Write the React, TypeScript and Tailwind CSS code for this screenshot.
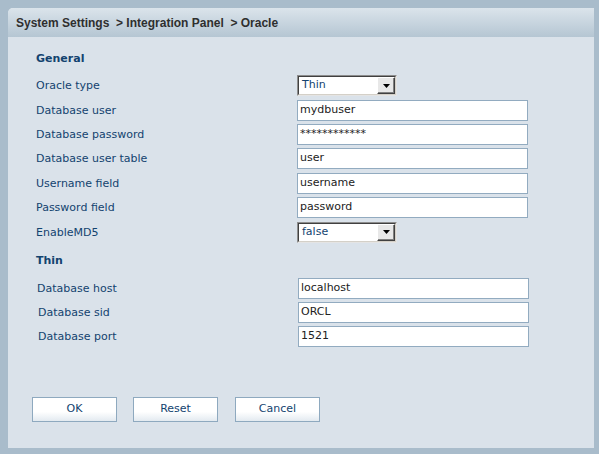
import React from "react";

const labelCls = "w-[261px] shrink-0 text-[11px] text-[#13436f] leading-none";
const font = { fontFamily: '"DejaVu Sans", Verdana, sans-serif' };

function TextInput({ value }: { value: string }) {
  return (
    <div className="flex h-[21px] w-[231px] items-center border border-[#92abc0] bg-white pl-[2px] text-[11px] text-[#222]">
      {value}
    </div>
  );
}

function Select({ value }: { value: string }) {
  return (
    <div className="flex h-[21px] w-[100px] border border-t-[#8d8d8d] border-l-[#8d8d8d] border-r-[#e4e4e4] border-b-[#e4e4e4] bg-white">
      <div className="flex flex-1 items-center border border-t-[#404040] border-l-[#404040] border-r-[#d4d0c8] border-b-[#d4d0c8] pl-[3px] text-[11px] text-[#13436f]">
        <span className="flex-1">{value}</span>
        <div className="flex h-[17px] w-[18px] items-center justify-center border border-t-[#ffffff] border-l-[#ffffff] border-r-[#404040] border-b-[#404040] bg-[#e8e8e8] shadow-[inset_-1px_-1px_0_#808080]">
          <svg width="7" height="4" viewBox="0 0 7 4">
            <polygon points="0,0 7,0 3.5,4" fill="#000" />
          </svg>
        </div>
      </div>
    </div>
  );
}

function Row({
  label,
  h,
  pad = "",
  children,
}: {
  label: string;
  h: string;
  pad?: string;
  children: React.ReactNode;
}) {
  return (
    <div className={`flex items-center ${h}`}>
      <div className={`${labelCls} ${pad}`}>{label}</div>
      {children}
    </div>
  );
}

function Button({ label, className = "" }: { label: string; className?: string }) {
  return (
    <button
      className={`h-[25px] w-[85px] border border-[#8ea9bf] bg-gradient-to-b from-white from-60% to-[#e3eaf0] text-[11px] text-[#13436f] ${className}`}
    >
      {label}
    </button>
  );
}

export default function App() {
  return (
    <div className="h-[454px] w-[599px] bg-[#a9bccb] pl-[8px] pt-[8px]" style={font}>
      <div className="flex h-[440px] w-[586px] flex-col overflow-hidden rounded-tl-[5px] bg-[#dae2ea]">
        <div
          className="flex h-[29px] shrink-0 items-center bg-gradient-to-b from-[#dbe4eb] to-[#b5c6d3] pl-[8px] text-[12px] font-bold text-[#2f2f2f]"
          style={{ fontFamily: '"Liberation Sans", Arial, sans-serif' }}
        >
          System Settings&nbsp;&nbsp;&gt; Integration Panel&nbsp;&nbsp;&gt; Oracle
        </div>
        <div className="flex flex-col pl-[28px] pt-[14px]">
          <div className="flex h-[16px] items-center text-[11px] font-bold text-[#13436f]">
            General
          </div>
          <div className="mt-[6px] flex flex-col">
            <Row label="Oracle type" h="h-[25px]">
              <Select value="Thin" />
            </Row>
            <Row label="Database user" h="h-[24px]">
              <TextInput value="mydbuser" />
            </Row>
            <Row label="Database password" h="h-[24px]">
              <TextInput value="************" />
            </Row>
            <Row label="Database user table" h="h-[25px]">
              <TextInput value="user" />
            </Row>
            <Row label="Username field" h="h-[24px]">
              <TextInput value="username" />
            </Row>
            <Row label="Password field" h="h-[25px]">
              <TextInput value="password" />
            </Row>
            <Row label="EnableMD5" h="h-[24px]">
              <Select value="false" />
            </Row>
          </div>
          <div className="mt-[8px] flex h-[18px] items-center text-[11px] font-bold text-[#13436f]">
            Thin
          </div>
          <div className="mt-[6px] flex flex-col pl-[1px]">
            <Row label="Database host" h="h-[24px]">
              <TextInput value="localhost" />
            </Row>
            <Row label="Database sid" h="h-[24px]" pad="pl-[1px]">
              <TextInput value="ORCL" />
            </Row>
            <Row label="Database port" h="h-[25px]" pad="pl-[1px]">
              <TextInput value="1521" />
            </Row>
          </div>
          <div className="ml-[-4px] mt-[48px] flex items-start">
            <Button label="OK" />
            <Button label="Reset" className="ml-[16px]" />
            <Button label="Cancel" className="ml-[17px]" />
          </div>
        </div>
      </div>
    </div>
  );
}
